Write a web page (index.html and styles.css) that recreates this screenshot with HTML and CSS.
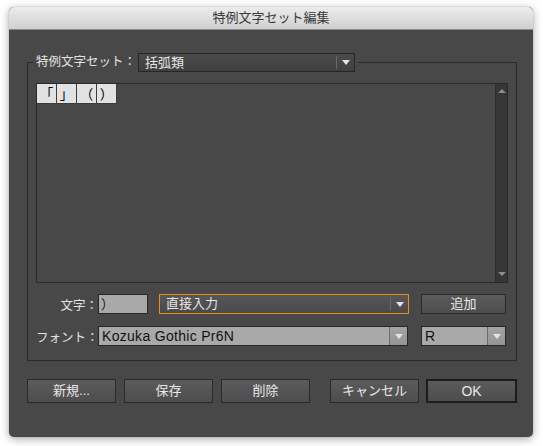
FILE: index.html
```html
<!DOCTYPE html>
<html lang="ja">
<head>
<meta charset="utf-8">
<title>特例文字セット編集</title>
<link rel="stylesheet" href="styles.css">
</head>
<body>
<div class="window">
  <div class="titlebar">特例文字セット編集</div>
  <div class="body">
    <fieldset class="group">
      <legend class="group-legend">
        <span class="legend-label">特例文字セット：</span>
        <div class="select dark set-select"><span class="select-text">括弧類</span><span class="select-arrow"></span></div>
      </legend>
      <div class="charbox">
        <div class="cells">
          <span class="cell">「</span><span class="cell">」</span><span class="cell">（</span><span class="cell">）</span>
        </div>
        <div class="scrollbar"><span class="sb-up"></span><span class="sb-down"></span></div>
      </div>
      <div class="row row-char">
        <span class="row-label">文字：</span>
        <div class="input char-input">）</div>
        <div class="select dark focused mode-select"><span class="select-text">直接入力</span><span class="select-arrow"></span></div>
        <button class="btn add-btn">追加</button>
      </div>
      <div class="row row-font">
        <span class="row-label">フォント：</span>
        <div class="select light font-select"><span class="select-text latin">Kozuka Gothic Pr6N</span><span class="select-arrow"></span></div>
        <div class="select light style-select"><span class="select-text latin">R</span><span class="select-arrow"></span></div>
      </div>
    </fieldset>
    <div class="buttons">
      <div class="btn-group left">
        <button class="btn big">新規...</button>
        <button class="btn big">保存</button>
        <button class="btn big">削除</button>
      </div>
      <div class="btn-group right">
        <button class="btn big">キャンセル</button>
        <button class="btn big default latin">OK</button>
      </div>
    </div>
  </div>
</div>
</body>
</html>
```
FILE: styles.css
```css
* { box-sizing: border-box; }
html, body { margin: 0; padding: 0; }
body {
  background: #ffffff;
  font-family: "Liberation Sans", "Noto Sans CJK JP", sans-serif;
  width: 543px;
  height: 446px;
  overflow: hidden;
  padding-top: 7px;
  padding-left: 9px;
}
.window {
  width: 524px;
  height: 430px;
  background: #484848;
  border-radius: 5px;
  box-shadow: 0 2px 9px rgba(0,0,0,0.35), 0 0 1px rgba(0,0,0,0.4);
  overflow: hidden;
}
.titlebar {
  height: 23px;
  line-height: 22px;
  text-align: center;
  font-size: 13px;
  color: #3a3a3a;
  background: linear-gradient(#ececec, #d0d0d0);
  border-bottom: 1px solid #8c8c8c;
}
.body {
  padding: 23px 16px 0 18px;
}
.group {
  margin: 0;
  min-width: 0;
  border: 1px solid #2a2a2a;
  padding: 11px 8px 14px 8px;
}
.group-legend {
  display: flex;
  align-items: center;
  padding: 0 3px;
  margin-left: -3px;
  height: 19px;
}
.legend-label {
  font-size: 12.5px;
  line-height: 19px;
  color: #e2e2e2;
  margin-right: 2px;
}
.select {
  display: flex;
  height: 19px;
  border: 1px solid #262626;
}
.select-text {
  flex: 1;
  font-size: 13px;
  line-height: 17px;
  padding-left: 6px;
  white-space: nowrap;
  overflow: hidden;
}
.select-arrow {
  width: 18px;
  display: flex;
  align-items: center;
  justify-content: center;
}
.select-arrow::after {
  content: "";
  width: 0;
  height: 0;
  border-left: 4px solid transparent;
  border-right: 4px solid transparent;
  border-top: 5px solid #e4e4e4;
}
.select.dark {
  background: linear-gradient(#4a4a4a, #404040);
  color: #e6e6e6;
}
.select.dark .select-arrow {
  border-left: 1px solid #6a6a6a;
  margin: 2px 0;
}
.set-select { width: 217px; }
.select.focused {
  border-color: #ec8c1e;
  background: linear-gradient(#575757, #4a4a4a);
}
.select.light {
  background: #a9a9a9;
  color: #111;
}
.select.light .select-arrow {
  background: linear-gradient(#a3a3a3, #959595);
  border-left: 1px solid #6c6c6c;
}
.charbox {
  height: 200px;
  border: 1px solid #2a2a2a;
  display: flex;
}
.cells {
  flex: 1;
  display: flex;
  align-items: flex-start;
}
.cell {
  width: 20px;
  height: 20px;
  background: #e2e2e2;
  border-right: 1px solid #3c3c3c;
  border-bottom: 1px solid #3c3c3c;
  color: #000;
  font-family: "Noto Sans CJK JP", sans-serif;
  font-size: 13.5px;
  font-weight: 400;
  line-height: 19px;
  text-align: center;
}
.scrollbar {
  width: 12px;
  background: #363636;
  border-left: 1px solid #2e2e2e;
  display: flex;
  flex-direction: column;
  justify-content: space-between;
  align-items: center;
  padding: 5px 0 6px;
}
.sb-up {
  width: 0; height: 0;
  border-left: 4px solid transparent;
  border-right: 4px solid transparent;
  border-bottom: 4px solid #8c8c8c;
}
.sb-down {
  width: 0; height: 0;
  border-left: 4px solid transparent;
  border-right: 4px solid transparent;
  border-top: 4px solid #8c8c8c;
}
.row {
  display: flex;
  align-items: center;
  height: 20px;
}
.row-char { margin-top: 11px; }
.row-font { margin-top: 12px; }
.row-label {
  width: 62px;
  text-align: right;
  font-size: 12.5px;
  color: #e2e2e2;
  white-space: nowrap;
}
.input {
  height: 20px;
  border: 1px solid #262626;
  background: #a9a9a9;
  color: #141432;
  font-family: "Noto Sans CJK JP", sans-serif;
  font-size: 13px;
  line-height: 18px;
  padding-left: 2px;
}
.char-input { width: 50px; margin-right: 11px; }
.mode-select { width: 250px; height: 20px; margin-right: 12px; }
.mode-select .select-text { line-height: 18px; }
.font-select { width: 310px; height: 20px; margin-right: 13px; }
.style-select { width: 85px; height: 20px; }
.font-select .select-text, .style-select .select-text { line-height: 18px; padding-left: 3px; }
.select-text.latin { font-size: 14px; letter-spacing: 0.3px; }
.btn {
  font-family: "Liberation Sans", "Noto Sans CJK JP", sans-serif;
  font-size: 13px;
  color: #e8e8e8;
  background: linear-gradient(#5b5b5b, #4d4d4d);
  border: 1px solid #2a2a2a;
  padding: 0;
  margin: 0;
}
.btn.latin { font-size: 14px; }
.add-btn { width: 85px; height: 20px; line-height: 18px; }
.buttons {
  display: flex;
  justify-content: space-between;
  margin-top: 18px;
}
.btn-group { display: flex; }
.btn-group.left { gap: 8px; }
.btn-group.right { gap: 7px; }
.btn.big { width: 89px; height: 24px; line-height: 22px; }
.btn.big.default { width: 91px; border: 2px solid #1c1c1c; line-height: 20px; }
```
